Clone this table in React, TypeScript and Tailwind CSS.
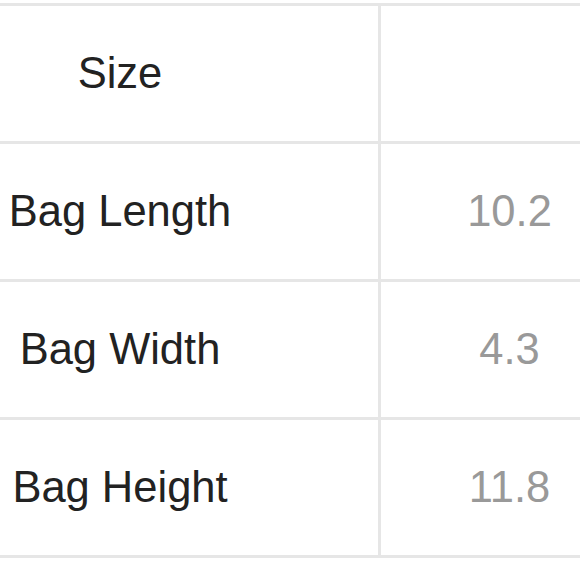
const rows: { label: string; value: string }[] = [
  { label: 'Size', value: '' },
  { label: 'Bag Length', value: '10.2' },
  { label: 'Bag Width', value: '4.3' },
  { label: 'Bag Height', value: '11.8' },
];

export default function App() {
  return (
    <div className="w-[580px] h-[580px] overflow-hidden bg-white pt-[3px] font-['Liberation_Sans',Arial,sans-serif]">
      <div className="ml-[-138px] w-[800px] border-t-[3px] border-[#e6e6e6]">
        {rows.map((r) => (
          <div key={r.label} className="flex h-[138px] border-b-[3px] border-[#e6e6e6]">
            <div className="w-[516px] flex items-center justify-center text-[43.5px] text-[#222]">{r.label}</div>
            <div className="w-[260px] border-l-[3px] border-[#e6e6e6] flex items-center justify-center text-[43.5px] text-[#999]">
              {r.value}
            </div>
          </div>
        ))}
      </div>
    </div>
  );
}
